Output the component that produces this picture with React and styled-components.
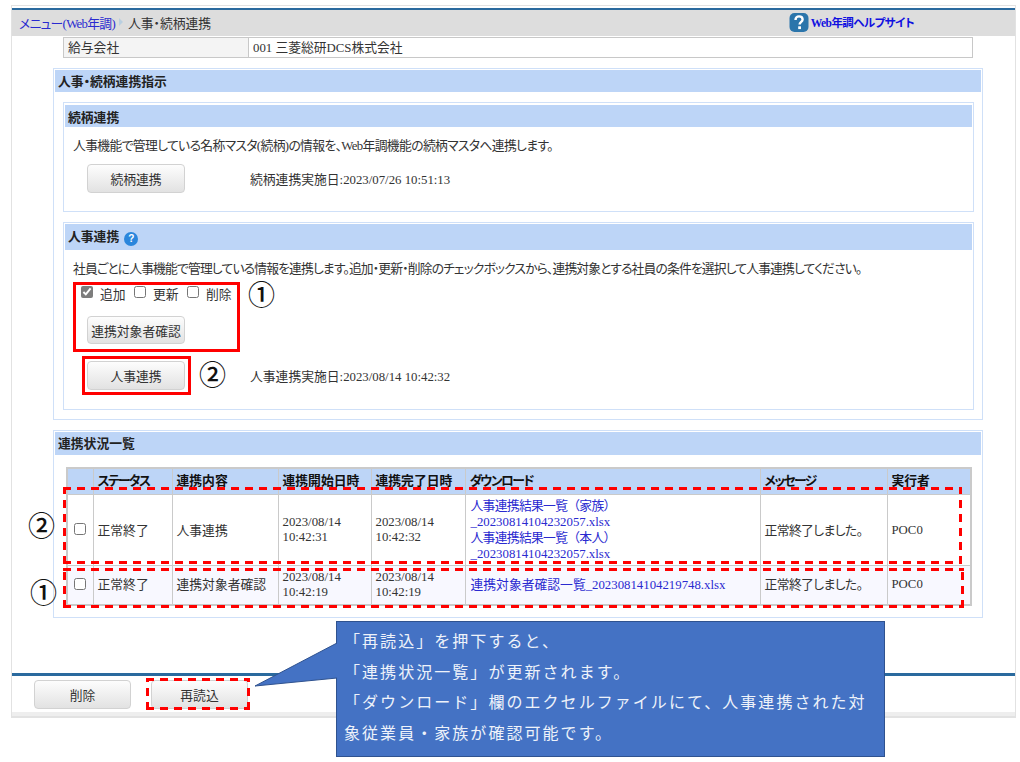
import React from 'react';
import styled, { createGlobalStyle } from 'styled-components';

const GlobalStyle = createGlobalStyle`
  html, body {
    margin: 0;
    padding: 0;
    background: #fff;
  }
  body {
    font-family: "Liberation Serif", "Noto Sans CJK JP", serif;
    font-size: 12.8px;
    color: #333;
    font-feature-settings: "palt";
  }
`;

const COLUMNS = [26, 79, 106, 93, 94, 295, 127, 84];

const ROWS = [
  {
    status: '正常終了',
    kind: '人事連携',
    start: ['2023/08/14', '10:42:31'],
    end: ['2023/08/14', '10:42:32'],
    files: [
      { name: '人事連携結果一覧（家族）', wide: true },
      { name: '_20230814104232057.xlsx' },
      { name: '人事連携結果一覧（本人）', wide: true },
      { name: '_20230814104232057.xlsx' }
    ],
    height: 71
  },
  {
    status: '正常終了',
    kind: '連携対象者確認',
    start: ['2023/08/14', '10:42:19'],
    end: ['2023/08/14', '10:42:19'],
    files: [{ name: '連携対象者確認一覧_20230814104219748.xlsx' }],
    height: 39,
    shaded: true
  }
];

const HelpSquare = () => (
  <svg width="20" height="19" viewBox="0 0 20 19">
    <rect x="0.5" y="0" width="19" height="19" rx="5" fill="#2b75ab" />
    <path d="M6.5 7 C6.5 4.6 8 3.4 10 3.4 C12.2 3.4 13.6 4.7 13.6 6.5 C13.6 8.8 10.6 9 10.6 11.6" fill="none" stroke="#fff" strokeWidth="2.4" />
    <rect x="9.2" y="13.3" width="2.8" height="2.8" fill="#fff" />
  </svg>
);

const App = () => (
  <Page>
    <GlobalStyle />
    <Frame>
      <TopBar>
        <Crumbs>
          <CrumbLink>メニュー(Web年調)</CrumbLink>
          <CrumbArrow />
          <span>人事・続柄連携</span>
        </Crumbs>
        <HelpLink>
          <HelpSquare />
          Web年調ヘルプサイト
        </HelpLink>
      </TopBar>

      <Content>
        <CompanyRow>
          <CompanyLabel>給与会社</CompanyLabel>
          <CompanyValue>001 三菱総研DCS株式会社</CompanyValue>
        </CompanyRow>

        <Section>
          <SectionHead>人事・続柄連携指示</SectionHead>
          <SectionBody>
            <Panel $height={110} $pad={2}>
              <PanelHead $height={22}>続柄連携</PanelHead>
              <PanelText $top={10} $spacing={-0.64}>人事機能で管理している名称マスタ(続柄)の情報を、Web年調機能の続柄マスタへ連携します。</PanelText>
              <ActionRow $top={9}>
                <Button>続柄連携</Button>
                <ActionDate>続柄連携実施日:2023/07/26 10:51:13</ActionDate>
              </ActionRow>
            </Panel>

            <Panel $height={188} $pad={1}>
              <PanelHead $height={26} $lift={4}>
                人事連携
                <HelpDot>?</HelpDot>
              </PanelHead>
              <PanelText $top={10} $spacing={-0.85}>社員ごとに人事機能で管理している情報を連携します。追加・更新・削除のチェックボックスから、連携対象とする社員の条件を選択して人事連携してください。</PanelText>
              <CheckRow>
                <CheckLabel><input type="checkbox" defaultChecked />追加</CheckLabel>
                <CheckLabel><input type="checkbox" />更新</CheckLabel>
                <CheckLabel><input type="checkbox" />削除</CheckLabel>
              </CheckRow>
              <TargetRow>
                <Button $height={28}>連携対象者確認</Button>
              </TargetRow>
              <ActionRow $top={17}>
                <Button>人事連携</Button>
                <ActionDate>人事連携実施日:2023/08/14 10:42:32</ActionDate>
              </ActionRow>
            </Panel>
          </SectionBody>
        </Section>

        <Section $top={10} $height={188}>
          <SectionHead $height={23}>連携状況一覧</SectionHead>
          <TableWrap>
            <StatusTable>
              <colgroup>
                {COLUMNS.map((w, i) => <col key={i} width={w} />)}
              </colgroup>
              <thead>
                <tr>
                  <th />
                  <th><Kana>ステータス</Kana></th>
                  <th>連携内容</th>
                  <th>連携開始日時</th>
                  <th>連携完了日時</th>
                  <th><Kana>ダウンロード</Kana></th>
                  <th><Kana>メッセージ</Kana></th>
                  <th>実行者</th>
                </tr>
              </thead>
              <tbody>
                {ROWS.map((row, i) => (
                  <StatusRow key={i} $height={row.height} $shaded={row.shaded}>
                    <CheckCell><input type="checkbox" /></CheckCell>
                    <TextCell>{row.status}</TextCell>
                    <TextCell>{row.kind}</TextCell>
                    <td>{row.start[0]}<br />{row.start[1]}</td>
                    <td>{row.end[0]}<br />{row.end[1]}</td>
                    <LinkCell>
                      {row.files.map((f, j) => <FileLine key={j} $wide={f.wide}>{f.name}</FileLine>)}
                    </LinkCell>
                    <MessageCell>正常終了しました。</MessageCell>
                    <td>POC0</td>
                  </StatusRow>
                ))}
              </tbody>
            </StatusTable>
          </TableWrap>
        </Section>
      </Content>

      <Footer>
        <Button $width={97}>削除</Button>
        <Button $width={97}>再読込</Button>
      </Footer>
      <FooterStrip />
    </Frame>

    {/* 説明用の赤枠と吹き出し */}
    <RedBox $x={73} $y={282} $w={167} $h={70} />
    <RedBox $x={82} $y={356} $w={109} $h={39} />
    <DashBox $x={63} $y={487} $w={899} $h={77} />
    <DashBox $x={63} $y={568} $w={901} $h={40} />
    <DashBox $x={146} $y={678} $w={104} $h={32} />
    <Mark $x={248} $y={276}>①</Mark>
    <Mark $x={199} $y={356}>②</Mark>
    <Mark $x={28} $y={507}>②</Mark>
    <Mark $x={30} $y={574}>①</Mark>

    <CalloutTail width="84" height="50" viewBox="0 0 84 50">
      <polygon points="83,1 1,44 83,36" fill="#4472c4" />
      <polyline points="83,1 1,44 83,36" fill="none" stroke="#2f528f" strokeWidth="1" />
    </CalloutTail>
    <Callout>
      <div>「再読込」を押下すると、</div>
      <div>「連携状況一覧」が更新されます。</div>
      <div>「ダウンロード」欄のエクセルファイルにて、人事連携された対</div>
      <div>象従業員・家族が確認可能です。</div>
    </Callout>
  </Page>
);

export default App;

const Page = styled.div`
  position: relative;
  width: 1020px;
  height: 762px;
  overflow: hidden;
  padding-top: 5px;
  box-sizing: border-box;
`;

const Frame = styled.div`
  margin-left: 11px;
  width: 1005px;
  height: 713px;
  box-sizing: border-box;
  border: 1px solid #e2e2e2;
  border-bottom-width: 2px;
  padding-top: 2px;
  display: flex;
  flex-direction: column;
`;

const TopBar = styled.div`
  flex: none;
  height: 24px;
  border-top: 2px solid #2a6a9e;
  background: #dddddd;
  display: flex;
  align-items: center;
  justify-content: space-between;
  padding: 0 101px 2px 7px;
  box-sizing: content-box;
  margin-bottom: -2px;
`;

const Crumbs = styled.div`
  display: flex;
  align-items: center;
`;

const CrumbLink = styled.span`
  color: #2a2ad0;
  letter-spacing: -0.7px;
`;

const CrumbArrow = styled.span`
  width: 0;
  height: 0;
  margin: 0 5px 0 4px;
  border-left: 4px solid #b9cfe0;
  border-top: 4px solid transparent;
  border-bottom: 4px solid transparent;
`;

const HelpLink = styled.div`
  display: flex;
  align-items: center;
  gap: 2px;
  color: #1010e0;
  font-size: 11.5px;
  font-weight: 700;
  letter-spacing: -0.55px;
`;

const Content = styled.div`
  flex: 1;
  padding: 3px 0 0 41px;
`;

const CompanyRow = styled.div`
  display: flex;
  margin-left: 10px;
  width: 910px;
  height: 21px;
  box-sizing: border-box;
  border: 1px solid #c8c8c8;
`;

const CompanyLabel = styled.div`
  width: 185px;
  padding-left: 4px;
  box-sizing: border-box;
  background: #f4f4f4;
  border-right: 1px solid #c8c8c8;
  line-height: 21px;
`;

const CompanyValue = styled.div`
  padding-left: 4px;
  line-height: 21px;
`;

const Section = styled.div`
  width: 930px;
  margin-top: ${p => p.$top || 10}px;
  box-sizing: border-box;
  border: 1px solid #cfe0f8;
  padding: 1px;
  ${p => p.$height && `height: ${p.$height}px;`}
`;

const SectionHead = styled.div`
  height: ${p => p.$height || 22}px;
  padding-left: 3px;
  background: #bdd5f7;
  font-weight: 700;
  color: #222;
  line-height: ${p => (p.$height || 22) + 2}px;
`;

const SectionBody = styled.div`
  padding: 10px 7px 8px 8px;
  display: flex;
  flex-direction: column;
  gap: 10px;
`;

const Panel = styled.div`
  height: ${p => p.$height}px;
  box-sizing: border-box;
  border: 1px solid #cfe0f8;
  padding: ${p => p.$pad}px 1px 0;
`;

const PanelHead = styled.div`
  height: ${p => p.$height}px;
  box-sizing: border-box;
  padding: 0 0 ${p => p.$lift || 0}px 3px;
  background: #bdd5f7;
  font-weight: 700;
  color: #222;
  display: flex;
  align-items: center;
`;

const HelpDot = styled.span`
  width: 14px;
  height: 14px;
  margin: 8px 0 0 5px;
  border-radius: 50%;
  background: #2a86dc;
  color: #fff;
  font: 700 10px "Liberation Sans", sans-serif;
  line-height: 14px;
  text-align: center;
`;

const PanelText = styled.div`
  margin-top: ${p => p.$top}px;
  padding-left: 8px;
  line-height: 18px;
  letter-spacing: ${p => p.$spacing}px;
  white-space: nowrap;
`;

const ActionRow = styled.div`
  margin-top: ${p => p.$top}px;
  padding-left: 22px;
  display: flex;
  align-items: center;
`;

const Button = styled.button`
  width: ${p => p.$width || 98}px;
  height: ${p => p.$height || 29}px;
  flex: none;
  padding: 0;
  box-sizing: border-box;
  border: 1px solid #d2d2d2;
  border-radius: 4px;
  background: linear-gradient(#fdfdfd, #e2e2e2);
  color: #333;
  font: inherit;
`;

const ActionDate = styled.div`
  margin-left: 65px;
`;

const CheckRow = styled.div`
  margin-top: 5px;
  padding-left: 16px;
  height: 20px;
  display: flex;
  align-items: center;
  gap: 8px;
`;

const CheckLabel = styled.label`
  display: flex;
  align-items: center;
  gap: 7px;
  min-width: 45px;
  input {
    width: 12px;
    height: 12px;
    margin: 0 0 2px;
    accent-color: #7d7d7d;
  }
`;

const TargetRow = styled.div`
  margin-top: 13px;
  padding-left: 22px;
`;

const TableWrap = styled.div`
  padding: 12px 0 0 11px;
`;

const StatusTable = styled.table`
  width: 904px;
  table-layout: fixed;
  border-collapse: collapse;
  border: 2px solid #cacaca;
  th, td {
    border: 1px solid #cacaca;
    padding: 0 0 0 4px;
    text-align: left;
    line-height: 15px;
  }
  th {
    height: 25px;
    background: #bdd5f7;
    color: #111;
    font-weight: 700;
  }
`;

const Kana = styled.span`
  letter-spacing: -1.6px;
`;

const StatusRow = styled.tr`
  height: ${p => p.$height}px;
  background: ${p => (p.$shaded ? '#f8f8ff' : '#fff')};
`;

const CheckCell = styled.td`
  input {
    display: block;
    width: 12px;
    height: 12px;
    margin: 0 0 2px 2px;
    accent-color: #7d7d7d;
  }
`;

const TextCell = styled.td`
  padding-top: 2px !important;
`;

const LinkCell = styled.td`
  color: #2a2ad0;
  padding-left: 5px !important;
`;

const FileLine = styled.div`
  line-height: 16px;
  ${p => p.$wide && `
    font-feature-settings: normal;
    letter-spacing: -0.7px;
  `}
`;

const MessageCell = styled(TextCell)`
  letter-spacing: -0.6px;
`;

const Footer = styled.div`
  flex: none;
  height: 39px;
  box-sizing: border-box;
  border-top: 3px solid #2a6a9e;
  padding: 4px 0 0 22px;
  display: flex;
  gap: 20px;
  align-items: flex-start;
`;

const FooterStrip = styled.div`
  flex: none;
  height: 4px;
  background: #eeeeee;
`;

const RedBox = styled.div`
  position: absolute;
  left: ${p => p.$x}px;
  top: ${p => p.$y}px;
  width: ${p => p.$w}px;
  height: ${p => p.$h}px;
  box-sizing: border-box;
  border: 3px solid #ff0000;
`;

const DashBox = styled(RedBox)`
  border: none;
  background:
    repeating-linear-gradient(90deg, #ff0000 0 8px, transparent 8px 14px) top left / 100% 3px no-repeat,
    repeating-linear-gradient(90deg, #ff0000 0 8px, transparent 8px 14px) bottom left / 100% 3px no-repeat,
    repeating-linear-gradient(0deg, #ff0000 0 8px, transparent 8px 14px) top left / 3px 100% no-repeat,
    repeating-linear-gradient(0deg, #ff0000 0 8px, transparent 8px 14px) top right / 3px 100% no-repeat;
`;

const Mark = styled.div`
  position: absolute;
  left: ${p => p.$x}px;
  top: ${p => p.$y}px;
  font: 500 27px/36px "Noto Sans CJK JP", sans-serif;
  color: #111;
`;

const CalloutTail = styled.svg`
  position: absolute;
  left: 254px;
  top: 642px;
  z-index: 2;
`;

const Callout = styled.div`
  position: absolute;
  left: 336px;
  top: 621px;
  width: 549px;
  height: 136px;
  box-sizing: border-box;
  padding: 3px 0 0 7px;
  background: #4472c4;
  border: 1px solid #2f528f;
  color: #eef2fa;
  font: 400 16px/30.5px "Noto Sans CJK JP", sans-serif;
  letter-spacing: 2.05px;
  font-feature-settings: normal;
  z-index: 1;
`;
